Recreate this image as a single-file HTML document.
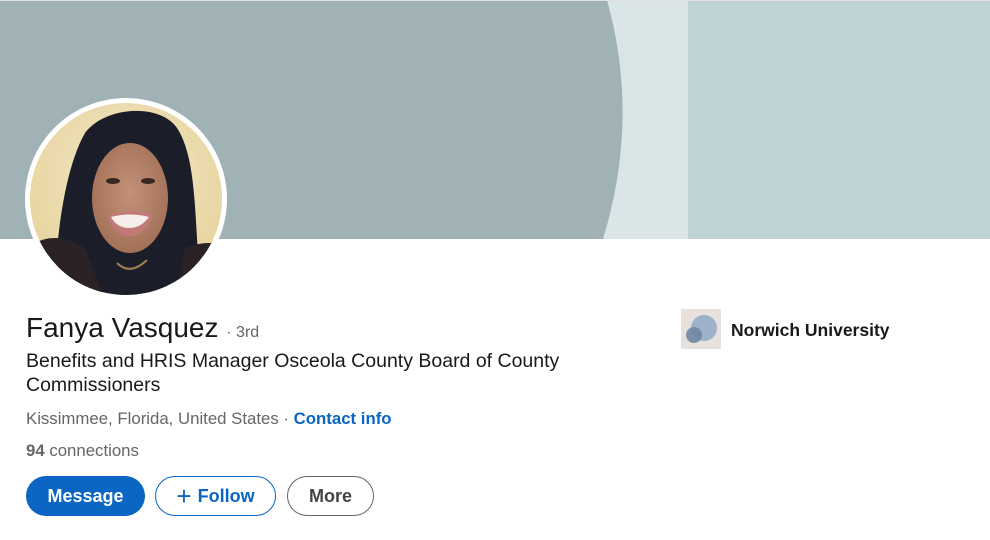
<!DOCTYPE html>
<html><head><meta charset="utf-8"><style>
*{margin:0;padding:0;box-sizing:border-box}
body{width:990px;height:540px;background:#fff;font-family:"Liberation Sans",sans-serif;position:relative;overflow:hidden;color:#191919}
.abs{position:absolute;white-space:nowrap}
.btn{position:absolute;top:476px;height:40px;border-radius:20px;font-size:18px;font-weight:bold;display:flex;align-items:center;justify-content:center}
</style></head><body>
<svg class="abs" style="left:0;top:0" width="990" height="240">
<rect x="0" y="0" width="990" height="239" fill="#bfd2d6"/>
<rect x="0" y="0" width="688" height="239" fill="#dae5e7"/>
<path d="M0,0 L607,0 Q640,118 603,239 L0,239 Z" fill="#a0b2b5"/>
<rect x="0" y="0" width="990" height="1" fill="#e0e0e0"/>
</svg>
<svg class="abs" style="left:25px;top:98px" width="202" height="202" viewBox="0 0 202 202">
<defs><clipPath id="c"><circle cx="101" cy="101" r="96"/></clipPath>
<radialGradient id="bg" cx="0.5" cy="0.4" r="0.6"><stop offset="0" stop-color="#f3e8c6"/><stop offset="1" stop-color="#e6d39c"/></radialGradient>
<radialGradient id="sk" cx="0.5" cy="0.45" r="0.6"><stop offset="0" stop-color="#c49278"/><stop offset="1" stop-color="#a06e55"/></radialGradient></defs>
<circle cx="101" cy="101" r="101" fill="#fff"/>
<g clip-path="url(#c)">
<rect width="202" height="202" fill="url(#bg)"/>
<path d="M30,202 C30,140 40,70 60,35 C80,8 135,5 152,30 C175,65 168,140 178,202 Z" fill="#1b1d29"/>
<ellipse cx="105" cy="100" rx="38" ry="55" fill="url(#sk)"/>
<ellipse cx="88" cy="83" rx="7" ry="3" fill="#3a2620"/>
<ellipse cx="123" cy="83" rx="7" ry="3" fill="#3a2620"/>
<path d="M82,117 Q105,110 128,117 Q120,138 104,138 Q88,138 82,117Z" fill="#c27a78"/>
<path d="M86,119 Q105,114 124,119 Q116,130 104,130 Q92,130 86,119Z" fill="#f5eeea"/>
<path d="M0,202 L0,150 Q30,130 60,150 L80,202 Z" fill="#2a2224"/>
<path d="M150,202 L160,150 Q185,140 202,150 L202,202Z" fill="#2a2224"/>
<path d="M92,165 Q105,178 122,162" stroke="#a08050" stroke-width="2" fill="none"/>
</g>
</svg>
<div class="abs" style="left:26px;top:312px;font-size:28px">Fanya Vasquez <span style="font-size:16px;color:#666">· 3rd</span></div>
<div class="abs" style="left:26px;top:349px;font-size:19.5px;line-height:24px;white-space:normal;width:580px">Benefits and HRIS Manager Osceola County Board of County Commissioners</div>
<div class="abs" style="left:26px;top:409px;font-size:16.8px;color:#666">Kissimmee, Florida, United States · <span style="color:#0a66c2;font-weight:bold">Contact info</span></div>
<div class="abs" style="left:26px;top:441px;font-size:16.8px;color:#666"><b>94</b> connections</div>
<div class="btn" style="left:26px;width:119px;background:#0a66c2;color:#fff">Message</div>
<div class="btn" style="left:155px;width:121px;border:1px solid #0a66c2;color:#0a66c2"><span style="font-size:26px;font-weight:normal;margin-right:6px;line-height:1">+</span>Follow</div>
<div class="btn" style="left:287px;width:87px;border:1px solid #666;color:#444">More</div>
<svg class="abs" style="left:681px;top:309px" width="40" height="40">
<rect width="40" height="40" fill="#e6e1db"/>
<circle cx="23" cy="19" r="13" fill="#9db1ca"/>
<circle cx="13" cy="26" r="8" fill="#6f86a3" opacity="0.9"/>
</svg>
<div class="abs" style="left:731px;top:320px;font-size:17.5px;font-weight:bold;color:#191919">Norwich University</div>
</body></html>
